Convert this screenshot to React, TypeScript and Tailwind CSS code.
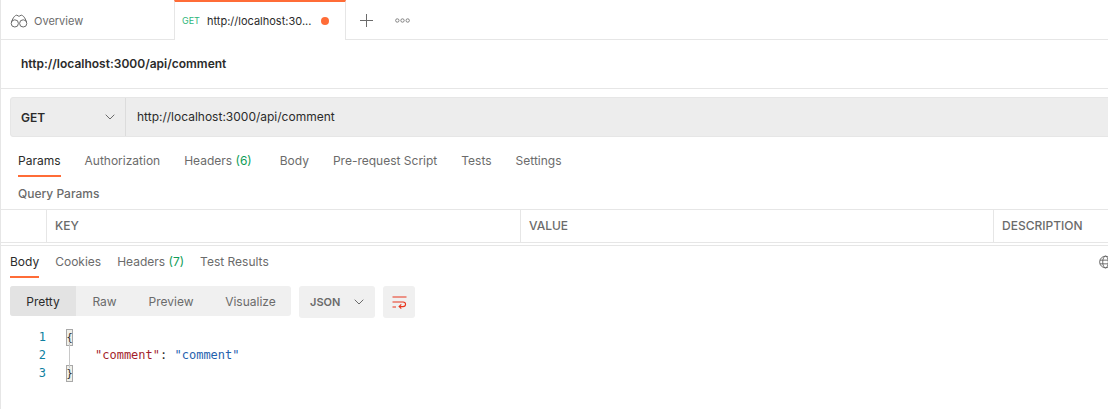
import React from "react";

const sans = "font-['Inter','Noto_Sans',sans-serif]";

function Binoculars() {
  return (
    <svg width="18" height="14" viewBox="0 0 18 14" fill="none" stroke="#6b6b6b" strokeWidth="1" className="shrink-0">
      <circle cx="4.8" cy="9.4" r="3.6" />
      <circle cx="13.2" cy="9.4" r="3.6" />
      <path d="M1.5 8C3 3.5 5 1.2 6.8 1.2 8 1.2 8.2 2.4 9 2.4 9.8 2.4 10 1.2 11.2 1.2 13 1.2 15 3.5 16.5 8" />
    </svg>
  );
}

function Chevron({ x = 0 }: { x?: number }) {
  return (
    <svg width="10" height="6" viewBox="0 0 10 6" fill="none" stroke="#6b6b6b" strokeWidth="1" style={{ marginLeft: x }}>
      <path d="M0.7 0.7 5 5 9.3 0.7" />
    </svg>
  );
}

function Brace({ ch }: { ch: string }) {
  return (
    <span className="inline-flex h-[17px] w-[7px] items-center justify-center border border-[#a8a8a8] bg-[#f0f0ea] text-[11px] leading-none text-[#333]">
      {ch}
    </span>
  );
}

export default function App() {
  return (
    <div className={`h-[409px] w-[1108px] overflow-hidden border-l border-[#e6e6e6] bg-white ${sans} text-[12px] text-[#6b6b6b]`}>
      {/* top tab strip */}
      <div className="flex h-10 items-stretch border-b border-[#e6e6e6]">
        <div className="flex w-[173px] items-center gap-[6px] pl-[9px] pt-[3px]">
          <Binoculars />
          <span className="text-[11px] text-[#6b6b6b]">Overview</span>
        </div>
        <div className="z-10 -mb-px flex w-[172px] items-center border-x border-[#e6e6e6] border-t-2 border-t-[#ff6c37] bg-white pl-[7px]">
          <span className="w-[25px] text-[9px] text-[#2fb67c]">GET</span>
          <span className="text-[11px] text-[#2b2b2b]">http://localhost:30...</span>
          <span className="ml-[10px] h-2 w-2 rounded-full bg-[#ff6c37]" />
        </div>
        <div className="flex items-center pl-[14px] pt-[1px]">
          <svg width="13" height="13" viewBox="0 0 13 13" stroke="#6b6b6b" strokeWidth="1">
            <path d="M6.5 0v13M0 6.5h13" />
          </svg>
          <svg width="15" height="5" viewBox="0 0 15 5" fill="none" stroke="#6b6b6b" strokeWidth="0.8" className="ml-[22px]">
            <circle cx="2.3" cy="2.5" r="1.7" />
            <circle cx="7.5" cy="2.5" r="1.7" />
            <circle cx="12.7" cy="2.5" r="1.7" />
          </svg>
        </div>
      </div>

      {/* request title */}
      <div className="flex h-[49px] items-center border-b border-[#e6e6e6] pl-5">
        <span className="text-[12px] font-semibold text-[#2b2b2b]">http://localhost:3000/api/comment</span>
      </div>

      {/* url bar */}
      <div className="pl-[9px] pt-2">
        <div className="flex h-10 w-[1120px] items-stretch rounded-[3px] border border-[#e6e6e6] bg-[#ededed]">
          <div className="flex w-[115px] items-center justify-between border-r border-[#dcdcdc] pl-[10px] pr-[10px]">
            <span className="pt-[1px] text-[12px] font-semibold text-[#2b2b2b]">GET</span>
            <Chevron />
          </div>
          <div className="flex items-center pl-[11px] pb-px text-[12px] text-[#2b2b2b]">http://localhost:3000/api/comment</div>
        </div>
      </div>

      {/* request tabs */}
      <div className="flex h-[40px] items-start gap-[24px] pl-[17px] pt-[16px] text-[12px] leading-[16px]">
        <span className="relative text-[#2b2b2b]">
          Params
          <span className="absolute left-0 right-0 top-[22px] h-[2px] bg-[#ff6c37]" />
        </span>
        <span>Authorization</span>
        <span>
          Headers <span className="text-[#0f9d58]">(6)</span>
        </span>
        <span className="ml-[4px]">Body</span>
        <span>Pre-request Script</span>
        <span>Tests</span>
        <span>Settings</span>
      </div>

      {/* query params */}
      <div className="flex h-[32px] items-center pl-[17px] pt-[2px] text-[12px] font-medium leading-none">Query Params</div>

      {/* table */}
      <div className="grid h-[34px] grid-cols-[46px_474px_473px_1fr] border-y border-[#e6e6e6] text-[12px] font-medium leading-none">
        <div className="border-r border-[#e6e6e6]" />
        <div className="flex items-center border-r border-[#e6e6e6] pl-2">KEY</div>
        <div className="flex items-center border-r border-[#e6e6e6] pl-2">VALUE</div>
        <div className="flex items-center pl-2">DESCRIPTION</div>
      </div>

      {/* response */}
      <div className="mt-[2px] border-t border-[#e6e6e6]">
        <div className="relative flex h-[30px] items-start gap-[16px] pl-[9px] pt-[8px] text-[12px] leading-[16px]">
          <span className="relative text-[#2b2b2b]">
            Body
            <span className="absolute left-0 right-0 top-[22px] h-[2px] bg-[#ff6c37]" />
          </span>
          <span>Cookies</span>
          <span>
            Headers <span className="text-[#0f9d58]">(7)</span>
          </span>
          <span>Test Results</span>
          <svg width="13" height="14" viewBox="0 0 14 14" fill="none" stroke="#555" strokeWidth="0.9" className="absolute right-[-4px] top-[9px]">
            <circle cx="7" cy="7" r="6.3" />
            <ellipse cx="7" cy="7" rx="3" ry="6.3" />
            <path d="M1 5h12M1 9h12" />
          </svg>
        </div>

        {/* toolbar */}
        <div className="mt-[10px] flex items-start pl-[9px]">
          <div className="flex h-[30px] w-[281px] items-center rounded-[3px] bg-[#f0f0f0] pt-[1px] text-[12px]">
            <div className="-mt-[1px] flex h-[30px] w-[66px] items-center justify-center rounded-l-[3px] bg-[#e3e3e3] pt-[1px] text-[#2b2b2b]">Pretty</div>
            <div className="flex w-[57px] justify-center">Raw</div>
            <div className="flex w-[76px] justify-center">Preview</div>
            <div className="flex w-[82px] justify-center pl-[1px]">Visualize</div>
          </div>
          <div className="ml-2 flex h-8 w-[76px] items-center rounded-[3px] bg-[#f0f0f0] pl-[11px]">
            <span className="text-[11px] font-semibold">JSON</span>
            <Chevron x={14} />
          </div>
          <div className="ml-2 flex h-8 w-8 items-center justify-center rounded-[3px] bg-[#f0f0f0]">
            <svg width="15" height="13" viewBox="0 0 15 13" fill="none" stroke="#e8351c" strokeWidth="1.1">
              <path d="M0.5 1h14M0.5 6h10.5c3.4 0 3.4 4.6 0 4.6H7.2M9.3 8.4 7.1 10.6l2.2 2M0.5 11H4" />
            </svg>
          </div>
        </div>

        {/* code */}
        <div className="mt-[10px] grid grid-cols-[45px_1fr] gap-x-[20px] font-['DejaVu_Sans_Mono',monospace] text-[12px] leading-[18px]">
          <div className="text-right text-[#0f7f9f]">
            <div>1</div>
            <div>2</div>
            <div>3</div>
          </div>
          <div className="relative text-[#2b2b2b]">
            <span className="absolute bottom-[14px] left-[3px] top-[14px] w-px bg-[#c8c8c8]" />
            <div className="flex h-[18px] items-center"><Brace ch="{" /></div>
            <div className="h-[18px] pl-[29px] whitespace-pre">
              <span className="text-[#a31e2c]">"comment"</span>: <span className="text-[#1f62ae]">"comment"</span>
            </div>
            <div className="flex h-[18px] items-center"><Brace ch="}" /></div>
          </div>
        </div>
      </div>
    </div>
  );
}
